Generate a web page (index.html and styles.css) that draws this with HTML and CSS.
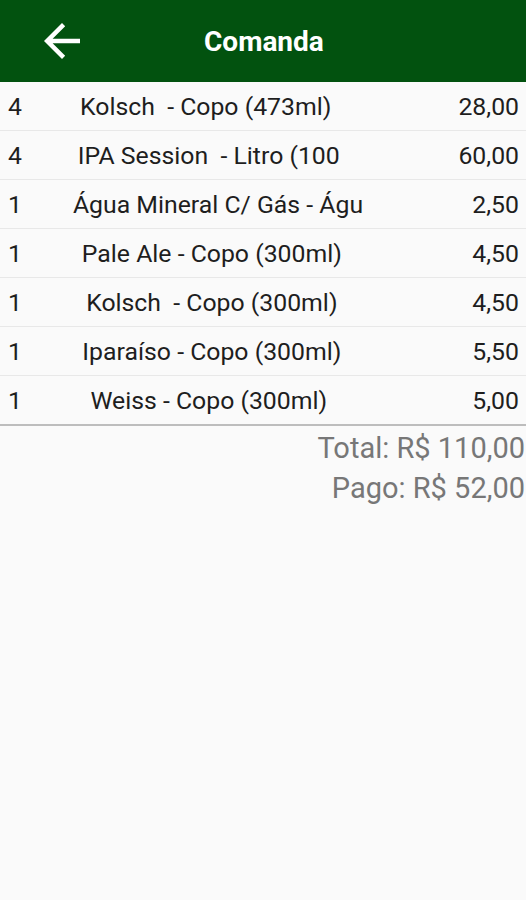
FILE: index.html
```html
<!DOCTYPE html>
<html lang="pt-BR">
<head>
<meta charset="utf-8">
<title>Comanda</title>
<link rel="stylesheet" href="styles.css">
</head>
<body>
<header class="appbar">
  <svg class="back" viewBox="0 0 24 24" aria-hidden="true"><path d="M20 11H7.83l5.59-5.59L12 4l-8 8 8 8 1.41-1.41L7.83 13H20v-2z"/></svg>
  <h1 class="title">Comanda</h1>
</header>
<main class="list">
  <div class="row"><span class="qty">4</span><span class="name">Kolsch  - Copo (473ml)    </span><span class="price">28,00</span></div>
  <div class="row"><span class="qty">4</span><span class="name">IPA Session  - Litro (100   </span><span class="price">60,00</span></div>
  <div class="row"><span class="qty">1</span><span class="name">Água Mineral C/ Gás - Águ</span><span class="price">2,50</span></div>
  <div class="row"><span class="qty">1</span><span class="name">Pale Ale - Copo (300ml)  </span><span class="price">4,50</span></div>
  <div class="row"><span class="qty">1</span><span class="name">Kolsch  - Copo (300ml)  </span><span class="price">4,50</span></div>
  <div class="row"><span class="qty">1</span><span class="name">Iparaíso - Copo (300ml)  </span><span class="price">5,50</span></div>
  <div class="row last"><span class="qty">1</span><span class="name">Weiss - Copo (300ml)   </span><span class="price">5,00</span></div>
</main>
<section class="totals">
  <p class="total">Total: R$ 110,00</p>
  <p class="total">Pago: R$ 52,00</p>
</section>
</body>
</html>
```
FILE: styles.css
```css
html, body {
  margin: 0;
  padding: 0;
  background: #fafafa;
  font-family: Roboto, "Liberation Sans", sans-serif;
}
body {
  height: 900px;
  overflow: hidden;
}
.appbar {
  height: 82px;
  background: #02520f;
  display: flex;
  align-items: center;
  padding-left: 35px;
  box-sizing: border-box;
}
.back {
  width: 54px;
  height: 54px;
  fill: #ffffff;
}
.title {
  margin: 0;
  color: #ffffff;
  font-size: 28px;
  font-weight: 700;
  margin-left: 115px;
}
.list {
  border-bottom: 2px solid #bdbdbd;
}
.row {
  display: grid;
  grid-template-columns: 60px 300px 1fr;
  align-items: center;
  height: 49px;
  border-bottom: 1px solid #e8e8e8;
  font-size: 24.8px;
  color: #1e1e1e;
  padding: 0 7px 0 8px;
  box-sizing: border-box;
}
.row.last {
  border-bottom: none;
  height: 48px;
}
.qty {
  text-align: left;
}
.name {
  text-align: center;
  white-space: pre;
}
.price {
  text-align: right;
}
.totals {
  padding-top: 2px;
  padding-right: 1px;
}
.total {
  margin: 0;
  text-align: right;
  font-size: 29px;
  line-height: 40px;
  color: #777777;
}
```
